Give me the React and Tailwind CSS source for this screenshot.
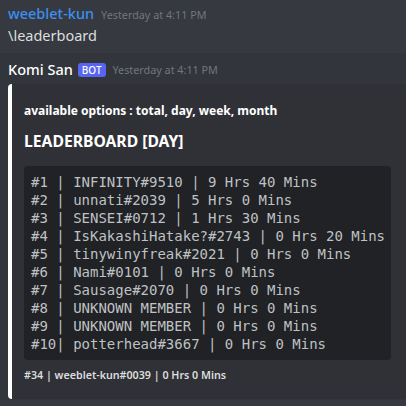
export default function App() {
  const rows = [
    "#1 | INFINITY#9510 | 9 Hrs 40 Mins",
    "#2 | unnati#2039 | 5 Hrs 0 Mins",
    "#3 | SENSEI#0712 | 1 Hrs 30 Mins",
    "#4 | IsKakashiHatake?#2743 | 0 Hrs 20 Mins",
    "#5 | tinywinyfreak#2021 | 0 Hrs 0 Mins",
    "#6 | Nami#0101 | 0 Hrs 0 Mins",
    "#7 | Sausage#2070 | 0 Hrs 0 Mins",
    "#8 | UNKNOWN MEMBER | 0 Hrs 0 Mins",
    "#9 | UNKNOWN MEMBER | 0 Hrs 0 Mins",
    "#10| potterhead#3667 | 0 Hrs 0 Mins",
  ];
  return (
    <div
      className="w-[406px] h-[406px] overflow-hidden bg-[#36393f] text-[#dcddde]"
      style={{ fontFamily: '"Noto Sans", "Open Sans", sans-serif' }}
    >
      <div className="pl-[8px] pt-[2px] h-[53px]">
        <div className="flex items-baseline h-[22px] leading-[22px]">
          <span className="text-[14.5px] font-medium text-[#3b8ff0]">weeblet-kun</span>
          <span className="ml-[7px] text-[10.8px] text-[#72767d]">Yesterday at 4:11 PM</span>
        </div>
        <div className="text-[14.5px] leading-[22px] text-[#dcddde]">\leaderboard</div>
      </div>
      <div className="bg-[#32353b] pt-[5px] pb-[1px]">
        <div className="pl-[8px] flex items-center h-[22px]">
          <span className="text-[14.5px] font-medium text-white leading-[22px]">Komi San</span>
          <span className="ml-[5px] bg-[#5865f2] text-white text-[10px] font-medium leading-[14px] px-[4px] rounded-[3px] h-[14px] mt-[1px]">
            BOT
          </span>
          <span className="ml-[7px] text-[10.8px] text-[#72767d] leading-[22px] mt-[2px]">Yesterday at 4:11 PM</span>
        </div>
        <div className="ml-[8px] mt-[4px] w-[400px] bg-[#2f3136] border-l-[4px] border-white rounded-l-[4px] pl-[12px] pr-[16px] pt-[18px] pb-[16px]">
          <div className="text-[12px] leading-[18px] font-bold text-white">
            available options : total, day, week, month
          </div>
          <div className="mt-[11px] text-[15.7px] leading-[20px] font-bold text-white">
            LEADERBOARD [DAY]
          </div>
          <div
            className="mt-[15px] w-[367px] bg-[#202225] rounded-[4px] px-[7px] py-[7px] text-[14px] leading-[18px] text-[#bfc1c4] whitespace-pre"
            style={{ fontFamily: '"DejaVu Sans Mono", "Liberation Mono", monospace' }}
          >
            {rows.map((r) => (
              <div key={r}>{r}</div>
            ))}
          </div>
          <div className="mt-[7px] text-[10.7px] leading-[16px] font-semibold text-[#dcddde]">
            #34 | weeblet-kun#0039 | 0 Hrs 0 Mins
          </div>
        </div>
      </div>
    </div>
  );
}
